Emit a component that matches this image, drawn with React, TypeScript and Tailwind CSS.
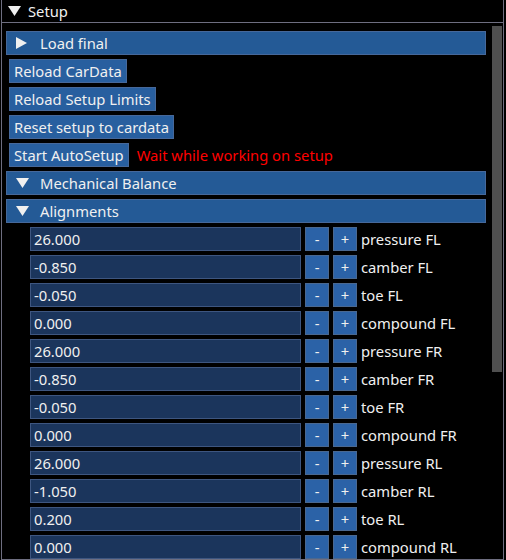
import React from "react";

const rows: [string, string][] = [
  ["26.000", "pressure FL"],
  ["-0.850", "camber FL"],
  ["-0.050", "toe FL"],
  ["0.000", "compound FL"],
  ["26.000", "pressure FR"],
  ["-0.850", "camber FR"],
  ["-0.050", "toe FR"],
  ["0.000", "compound FR"],
  ["26.000", "pressure RL"],
  ["-1.050", "camber RL"],
  ["0.200", "toe RL"],
  ["0.000", "compound RL"],
];

function ArrowDown() {
  return (
    <svg width="13" height="10" viewBox="0 0 13 10" className="shrink-0">
      <polygon points="0,0 13,0 6.5,10" fill="#f0f0f0" />
    </svg>
  );
}

function ArrowRight() {
  return (
    <svg width="11" height="12" viewBox="0 0 11 12" className="shrink-0">
      <polygon points="0,0 11,6 0,12" fill="#f0f0f0" />
    </svg>
  );
}

function Header({ label, open }: { label: string; open: boolean }) {
  return (
    <div className="flex h-[24px] w-[480px] shrink-0 items-center border border-[#46689a] bg-[#245a96] pl-[9px]">
      <div className="flex w-[24px] items-center">
        {open ? <ArrowDown /> : <ArrowRight />}
      </div>
      <span>{label}</span>
    </div>
  );
}

function Button({ label }: { label: string }) {
  return (
    <div className="flex h-[24px] shrink-0 items-center border border-[#46689a] bg-[#285f9f] px-[4px] whitespace-nowrap">
      {label}
    </div>
  );
}

function Row({ value, label }: { value: string; label: string }) {
  return (
    <div className="ml-[24px] flex h-[24px] shrink-0 items-center gap-[4px]">
      <div className="flex h-[24px] w-[271px] items-center border border-[#3e5680] bg-[#1b355c] px-[3px]">
        {value}
      </div>
      <div className="flex h-[24px] w-[24px] items-center justify-center border border-[#4a6890] bg-[#2b62a7]">
        -
      </div>
      <div className="flex h-[24px] w-[24px] items-center justify-center border border-[#4a6890] bg-[#2b62a7]">
        +
      </div>
      <span className="whitespace-nowrap">{label}</span>
    </div>
  );
}

export default function App() {
  return (
    <div className="h-[560px] w-[506px] overflow-hidden bg-black font-['Noto_Sans',sans-serif] text-[14.75px] leading-none text-[#f0f0f0]">
      <div className="ml-px flex h-[560px] w-[503px] flex-col border-x border-b border-[#6e6e80]">
        {/* Title bar */}
        <div className="flex h-[23px] shrink-0 items-center border-b border-[#6e6e80] pl-[6px]">
          <ArrowDown />
          <span className="pl-[7px]">Setup</span>
        </div>

        <div className="flex min-h-0 flex-1">
          {/* Content */}
          <div className="flex w-[484px] shrink-0 flex-col gap-[4px] pl-[4px] pt-[8px]">
            <Header label="Load final" open={false} />
            <div className="flex flex-col items-start gap-[4px] pl-[3px]">
              <Button label="Reload CarData" />
              <Button label="Reload Setup Limits" />
              <Button label="Reset setup to cardata" />
              <div className="flex items-center gap-[8px]">
                <Button label="Start AutoSetup" />
                <span className="whitespace-nowrap text-[#ff0000]">
                  Wait while working on setup
                </span>
              </div>
            </div>
            <Header label="Mechanical Balance" open />
            <Header label="Alignments" open />
            {rows.map(([v, l], i) => (
              <Row key={i} value={v} label={l} />
            ))}
          </div>

          {/* Scrollbar */}
          <div className="ml-[6px] mt-[3px] w-[10px] shrink-0">
            <div className="h-[346px] w-[10px] bg-[#4f4f4f]" />
          </div>
        </div>
      </div>
    </div>
  );
}
